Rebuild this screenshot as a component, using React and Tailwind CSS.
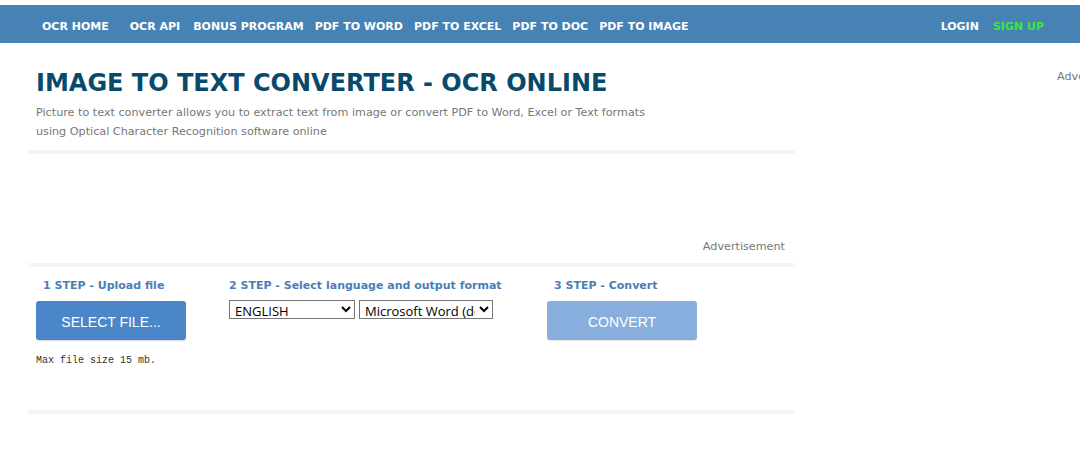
import React from "react";

const navLinks = [
  { label: "OCR HOME", extra: "mr-[10px]" },
  { label: "OCR API" },
  { label: "BONUS PROGRAM", extra: "ml-[2px]" },
  { label: "PDF TO WORD" },
  { label: "PDF TO EXCEL" },
  { label: "PDF TO DOC" },
  { label: "PDF TO IMAGE" },
];

const Divider = () => <div className="h-[4px] w-[767px] bg-[#f5f5f5]" />;

const App = () => {
  return (
    <div className="min-h-[461px] w-[1080px] overflow-hidden bg-white font-['DejaVu_Sans',Verdana,sans-serif]">
      {/* Top navigation */}
      <div className="pt-[5px]">
        <nav className="flex h-[38px] items-center bg-[#4682b4] pl-[42px] pr-[34px] pt-[6px] text-[11px] font-bold text-white">
          <div className="flex items-center gap-[11px]">
            {navLinks.map((link) => (
              <a key={link.label} href="#" className={link.extra || ""}>
                {link.label}
              </a>
            ))}
          </div>
          <div className="ml-auto flex items-center gap-[14px]">
            <a href="#">LOGIN</a>
            <a href="#" className="mr-[2px] text-[#3be63b]">SIGN UP</a>
          </div>
        </nav>
      </div>

      <div className="flex">
        {/* Main column */}
        <div className="ml-[28px] w-[767px]">
          <div className="px-[8px] pt-[25px]">
            <h1 className="text-[24px] font-bold leading-[30px] text-[#084a6c]">
              IMAGE TO TEXT CONVERTER - OCR ONLINE
            </h1>
            <p className="mt-[5px] text-[11.2px] leading-[19px] text-[#777]">
              Picture to text converter allows you to extract text from image or convert PDF to Word, Excel or Text formats
              <br />
              using Optical Character Recognition software online
            </p>
          </div>
          <div className="mt-[9px]">
            <Divider />
          </div>

          {/* Ad slot */}
          <div className="flex h-[109px] items-end justify-end pb-[7px] pr-[10px]">
            <span className="text-[11.2px] text-[#777]">Advertisement</span>
          </div>
          <Divider />

          {/* Steps */}
          <div className="flex h-[143px] pl-[8px] pt-[11px]">
            <div className="w-[193px]">
              <div className="pl-[7px] text-[11px] font-bold leading-[16px] text-[#4a7eb8]">
                1 STEP - Upload file
              </div>
              <button className="mt-[7px] h-[39px] w-[150px] rounded-[3px] bg-[#4a86c8] pt-[4px] font-['Liberation_Sans',Arial,sans-serif] text-[14px] text-white shadow-[0_1px_1px_rgba(0,0,0,0.15)]">
                SELECT FILE...
              </button>
              <div className="mt-[13px] font-['Liberation_Mono','Courier_New',monospace] text-[10px] text-[#333]">
                Max file size 15 mb.
              </div>
            </div>
            <div className="w-[318px]">
              <div className="text-[11px] font-bold leading-[16px] text-[#4a7eb8]">
                2 STEP - Select language and output format
              </div>
              <div className="mt-[6px] flex gap-[4px] font-['Open_Sans',Arial,sans-serif] text-[13px]">
                <select className="h-[19px] w-[126px] border border-[#767676] bg-white px-[1px] text-black">
                  <option>ENGLISH</option>
                </select>
                <select className="h-[19px] w-[134px] border border-[#767676] bg-white px-[1px] text-black">
                  <option>Microsoft Word (docx)</option>
                </select>
              </div>
            </div>
            <div>
              <div className="pl-[7px] text-[11px] font-bold leading-[16px] text-[#4a7eb8]">
                3 STEP - Convert
              </div>
              <button className="mt-[7px] h-[39px] w-[150px] rounded-[3px] bg-[#87aedc] pt-[4px] font-['Liberation_Sans',Arial,sans-serif] text-[14px] text-white shadow-[0_1px_1px_rgba(0,0,0,0.1)]">
                CONVERT
              </button>
            </div>
          </div>
          <Divider />
        </div>

        {/* Side ad column */}
        <div className="ml-[262px] pt-[26px] text-[11.2px] whitespace-nowrap text-[#777]">
          Advertisement
        </div>
      </div>
    </div>
  );
};

export default App;
